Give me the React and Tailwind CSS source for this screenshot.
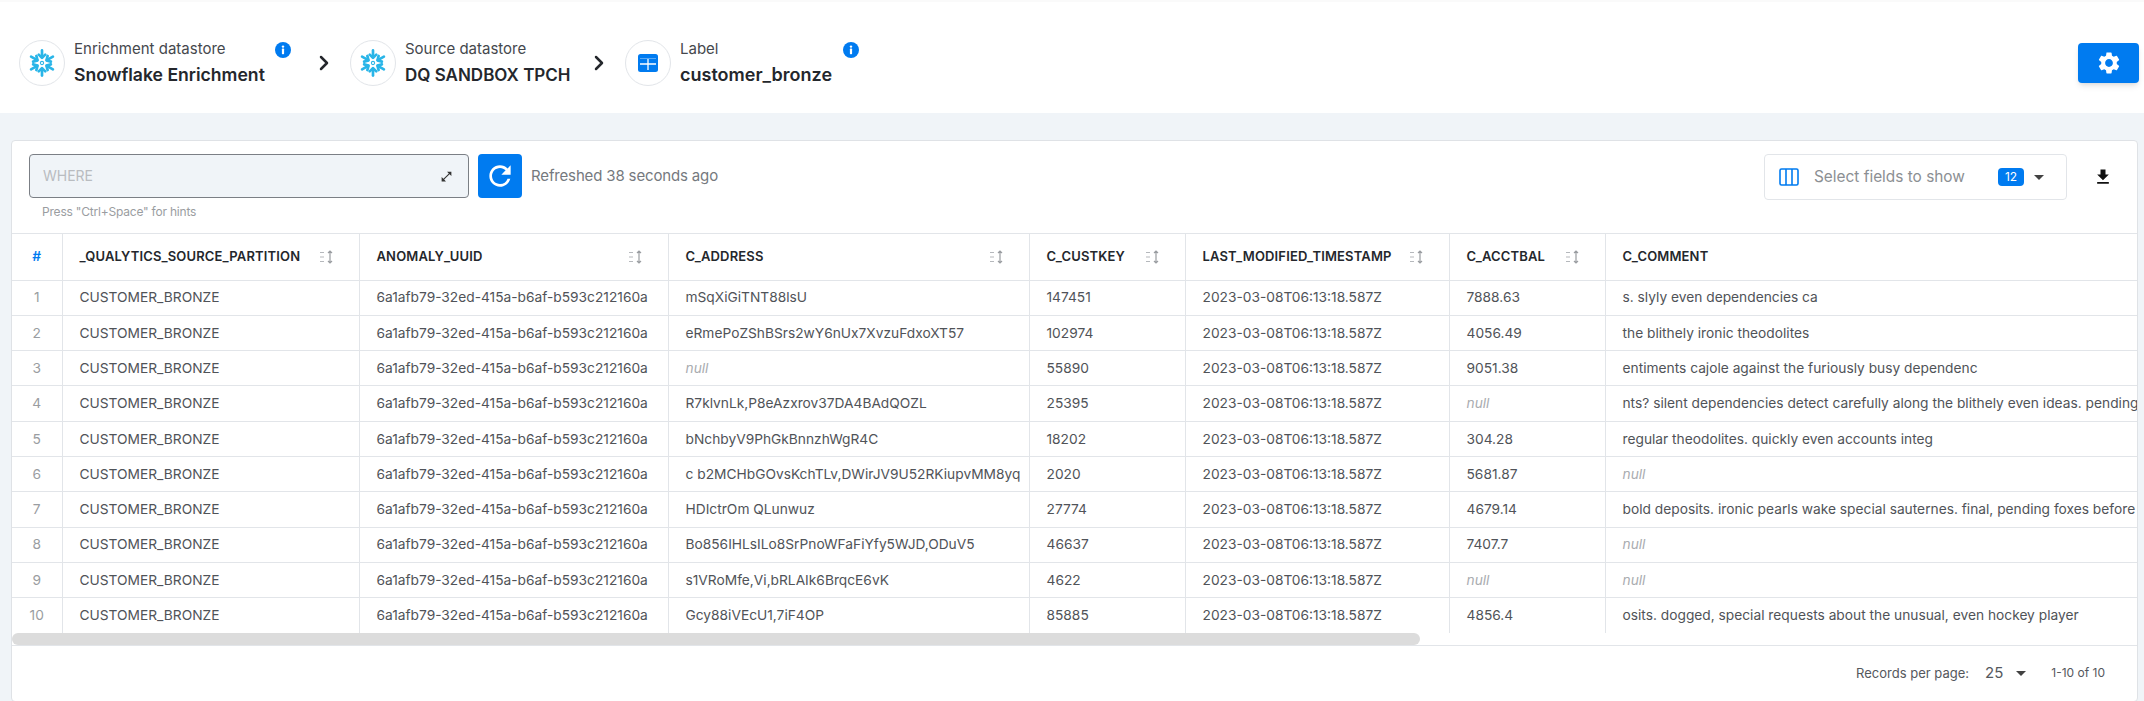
import React from 'react';
import { ChevronRight } from 'lucide-react';
import { MdSettings, MdFileDownload, MdRefresh, MdOpenInFull } from 'react-icons/md';

const font = { fontFamily: 'Inter, "Noto Sans", sans-serif' };

const columns = [
    { name: '_QUALYTICS_SOURCE_PARTITION', key: 'partition', width: 'w-[297px]' },
    { name: 'ANOMALY_UUID', key: 'uuid', width: 'w-[309px]' },
    { name: 'C_ADDRESS', key: 'address', width: 'w-[361px]' },
    { name: 'C_CUSTKEY', key: 'custkey', width: 'w-[156px]' },
    { name: 'LAST_MODIFIED_TIMESTAMP', key: 'modified', width: 'w-[264px]' },
    { name: 'C_ACCTBAL', key: 'acctbal', width: 'w-[156px]' },
    { name: 'C_COMMENT', key: 'comment', width: 'w-[1617px]', noSort: true },
];

const rows = [
    ['mSqXiGiTNT88lsU', '147451', '7888.63', 's. slyly even dependencies ca'],
    ['eRmePoZShBSrs2wY6nUx7XvzuFdxoXT57', '102974', '4056.49', 'the blithely ironic theodolites'],
    [null, '55890', '9051.38', 'entiments cajole against the furiously busy dependenc'],
    ['R7klvnLk,P8eAzxrov37DA4BAdQOZL', '25395', null, 'nts? silent dependencies detect carefully along the blithely even ideas. pending requests'],
    ['bNchbyV9PhGkBnnzhWgR4C', '18202', '304.28', 'regular theodolites. quickly even accounts integ'],
    ['c b2MCHbGOvsKchTLv,DWirJV9U52RKiupvMM8yq', '2020', '5681.87', null],
    ['HDIctrOm QLunwuz', '27774', '4679.14', 'bold deposits. ironic pearls wake special sauternes. final, pending foxes before the'],
    ['Bo856IHLsILo8SrPnoWFaFiYfy5WJD,ODuV5', '46637', '7407.7', null],
    ['s1VRoMfe,Vi,bRLAIk6BrqcE6vK', '4622', null, null],
    ['Gcy88iVEcU1,7iF4OP', '85885', '4856.4', 'osits. dogged, special requests about the unusual, even hockey player'],
].map(([address, custkey, acctbal, comment]) => ({
    partition: 'CUSTOMER_BRONZE',
    uuid: '6a1afb79-32ed-415a-b6af-b593c212160a',
    address,
    custkey,
    modified: '2023-03-08T06:13:18.587Z',
    acctbal,
    comment,
}));

const SnowflakeLogo = () => (
    <svg width="28" height="28" viewBox="1 1 24 24" fill="none" stroke="#29b5e8" strokeWidth="2.3" strokeLinecap="round" strokeLinejoin="round">
        {[0, 60, 120, 180, 240, 300].map(angle => (
            <g key={angle} transform={`rotate(${angle} 13 13)`}>
                <path d="M13 2.2v6" />
                <path d="M10.2 5.8 13 8.6 15.8 5.8" />
            </g>
        ))}
        <circle cx="13" cy="13" r="1.4" strokeWidth="0.9" />
    </svg>
);

const TableIcon = () => (
    <svg width="20" height="18" viewBox="0 0 20 18">
        <rect width="20" height="18" rx="2.5" fill="#007bf0" />
        <path d="M2 4.5h16" stroke="#5aa9f5" strokeWidth="1" fill="none" />
        <path d="M2 10h16M10 5v11" stroke="#fff" strokeWidth="1.3" fill="none" />
    </svg>
);

const InfoDot = () => (
    <span className="w-4 h-4 rounded-full bg-[#007bf0] flex items-center justify-center">
        <svg width="10" height="10" viewBox="0 0 10 10" fill="#fff">
            <circle cx="5" cy="1.6" r="1.2" />
            <rect x="3.9" y="3.6" width="2.2" height="5.6" rx="0.6" />
        </svg>
    </span>
);

const SortIcon = () => (
    <svg className="mr-[7px] shrink-0" width="16" height="14" viewBox="0 0 16 14" fill="none" strokeWidth="1.2">
        <path d="M1 2.5h4M1 7h4M1 11.5h4" stroke="#b5b8bc" />
        <path d="M11 1v12M9 3 11 1 13 3M9 11 11 13 13 11" stroke="#9a9da1" />
    </svg>
);

const Caret = ({ className }) => (
    <svg className={className} width="10" height="5" viewBox="0 0 10 5" fill="#424242">
        <path d="M0 0h10L5 5z" />
    </svg>
);

const Crumb = ({ icon, label, value, info, textWidth, valueClass }) => (
    <div className="flex items-center">
        <div className="w-[46px] h-[46px] rounded-full border border-[#e2e5e9] flex items-center justify-center bg-white">
            {icon}
        </div>
        <div className={`ml-[9px] -mt-[2px] ${textWidth}`}>
            <div className="flex justify-between items-center h-5">
                <span className="text-[15px] text-[#45484d]">{label}</span>
                {info && <InfoDot />}
            </div>
            <div className={`${valueClass} font-semibold text-[#24272c] mt-[5px] leading-5 whitespace-nowrap`}>{value}</div>
        </div>
    </div>
);

const App = () => {
    return (
        <div className="w-[2144px] h-[701px] overflow-hidden bg-[#f0f4f8] text-[#505358]" style={font}>
            {/* Header */}
            <div className="h-[113px] bg-white flex items-start justify-between pl-[19px] pr-[5px] border-t-2 border-[#fafafa]">
                <div className="flex items-center mt-[38px]">
                    <Crumb icon={<SnowflakeLogo />} label="Enrichment datastore" value="Snowflake Enrichment" info textWidth="w-[217px]" valueClass="text-[17.6px]" />
                    <ChevronRight size={24} strokeWidth={2.5} className="ml-[21px] mr-[14px] text-[#24272c]" />
                    <Crumb icon={<SnowflakeLogo />} label="Source datastore" value="DQ SANDBOX TPCH" textWidth="w-[163px]" valueClass="text-[17px]" />
                    <ChevronRight size={24} strokeWidth={2.5} className="ml-[19px] mr-[14px] text-[#24272c]" />
                    <Crumb icon={<TableIcon />} label="Label" value="customer_bronze" info textWidth="w-[179px]" valueClass="text-[18px]" />
                </div>
                <button className="mt-[41px] w-[61px] h-10 rounded bg-[#007bf0] shadow-md flex items-center justify-center text-white">
                    <MdSettings size={26} />
                </button>
            </div>

            {/* Card */}
            <div className="ml-[11px] mr-[6px] mt-[27px] h-[562px] bg-white border border-[#dfe2e6] rounded overflow-hidden flex flex-col">
                <div className="h-[92px] flex items-start justify-between pl-[17px] pr-[24px] pt-[13px] shrink-0">
                    <div>
                        <div className="flex items-center">
                            <div className="w-[440px] h-[44px] bg-[#f0f4f8] border border-[#7b7f85] rounded flex items-center justify-between pl-[13px] pr-[15px]">
                                <span className="text-sm text-[#b9bcc0]">WHERE</span>
                                <MdOpenInFull size={13} className="text-[#333]" />
                            </div>
                            <button className="ml-[9px] w-11 h-[44px] rounded-sm bg-[#007bf0] flex items-center justify-center">
                                <MdRefresh size={32} className="text-white" />
                            </button>
                            <span className="ml-[9px] text-[15px] text-[#75797e] tracking-[-0.15px]">Refreshed 38 seconds ago</span>
                        </div>
                        <div className="text-xs text-[#9a9da1] ml-[13px] mt-[6px] tracking-[-0.2px]">Press "Ctrl+Space" for hints</div>
                    </div>
                    <div className="flex items-center">
                        <div className="w-[303px] h-[46px] border border-[#e2e5e9] rounded flex items-center pl-[14px] pr-[22px]">
                            <svg width="20" height="18" viewBox="0 0 20 18" fill="none" stroke="#007bf0" strokeWidth="1.6">
                                <rect x="1" y="1" width="18" height="16" rx="1.5" />
                                <path d="M7 1v16M13 1v16" />
                            </svg>
                            <span className="ml-[15px] text-[15.4px] text-[#8c8f93]">Select fields to show</span>
                            <span className="ml-auto w-[26px] h-[18px] rounded bg-[#007bf0] text-white text-xs flex items-center justify-center">12</span>
                            <Caret className="ml-[10px]" />
                        </div>
                        <MdFileDownload size={20} className="ml-[26px] text-[#111]" />
                    </div>
                </div>

                {/* Table */}
                <div className="overflow-hidden border-t border-[#e2e5e9] shrink-0">
                    <table className="table-fixed border-collapse w-[3210px] text-[13.75px]">
                        <thead>
                            <tr className="h-[46px] border-b border-[#e2e5e9]">
                                <th className="w-[50px] text-center text-[#007bf0] font-semibold">#</th>
                                {columns.map(col => (
                                    <th key={col.key} className={`${col.width} border-l border-[#e2e5e9] px-[17px] text-left`}>
                                        <div className="flex items-center justify-between">
                                            <span className="text-[13px] font-semibold text-[#24272c] whitespace-nowrap tracking-[0.15px]">{col.name}</span>
                                            {!col.noSort && <SortIcon />}
                                        </div>
                                    </th>
                                ))}
                            </tr>
                        </thead>
                        <tbody>
                            {rows.map((row, index) => (
                                <tr key={index} className="h-[35.3px] border-b border-[#e2e5e9] last:border-b-0">
                                    <td className="text-center text-[#9a9da1]">{index + 1}</td>
                                    {columns.map(col => (
                                        <td key={col.key} className="border-l border-[#e2e5e9] px-[17px] whitespace-nowrap overflow-hidden">
                                            {row[col.key] === null
                                                ? <i className="text-[#a9acb0]">null</i>
                                                : row[col.key]}
                                        </td>
                                    ))}
                                </tr>
                            ))}
                        </tbody>
                    </table>
                </div>

                {/* Scrollbar */}
                <div className="h-[13px] border-b border-[#e2e5e9] shrink-0">
                    <div className="w-[1408px] h-[12px] bg-[#dcdcdc] rounded-md"></div>
                </div>

                {/* Pagination */}
                <div className="flex-1 flex items-center justify-end pr-[32px] text-[13px] text-[#55585d]">
                    <span>Records per page:</span>
                    <span className="ml-[16px] text-[15px]">25</span>
                    <Caret className="ml-[13px]" />
                    <span className="ml-[25px] text-xs">1-10 of 10</span>
                </div>
            </div>
        </div>
    );
};

export default App;
